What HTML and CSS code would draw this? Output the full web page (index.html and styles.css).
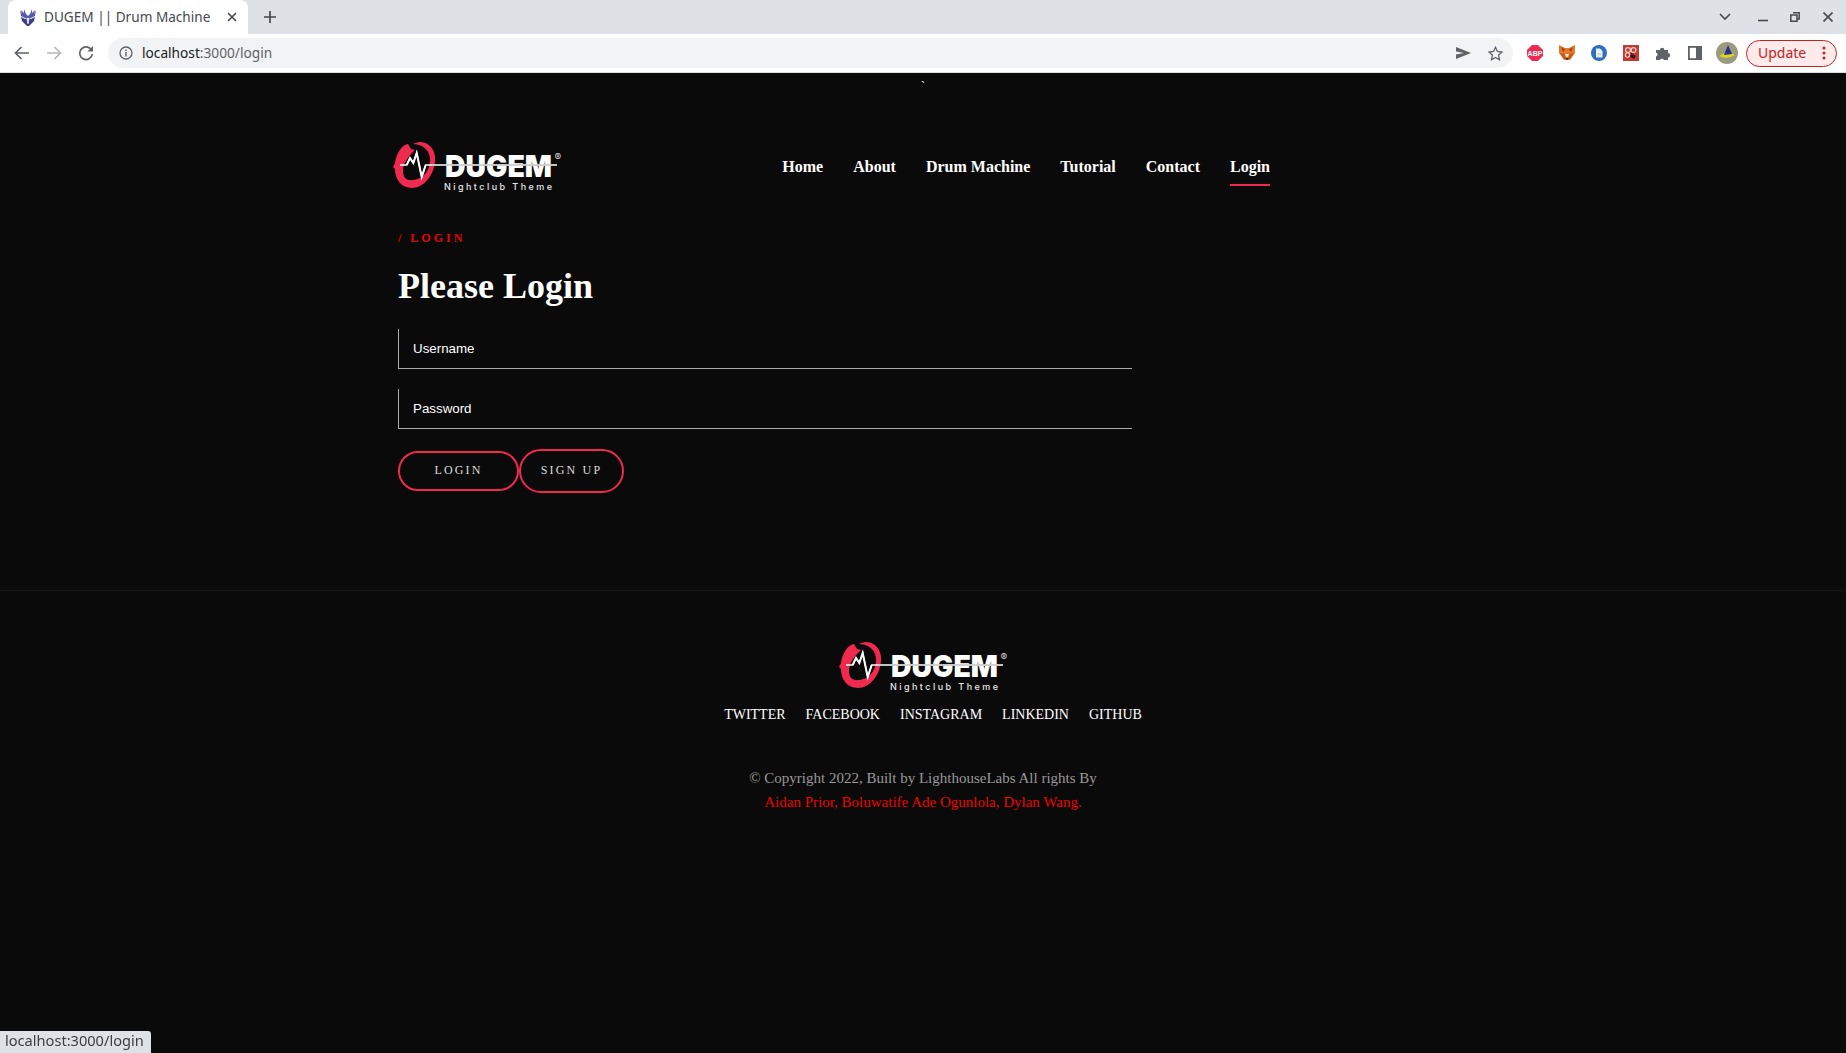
FILE: index.html
```html
<!DOCTYPE html>
<html lang="en">
<head>
    <meta charset="UTF-8">
    <title>DUGEM || Drum Machine</title>
    <link rel="stylesheet" href="styles.css">
</head>
<body>
    <!-- Browser tab strip -->
    <div class="tab-strip">
        <div class="tab">
            <svg class="favicon" width="16" height="17" viewBox="0 0 16 17">
                <path d="M0 1 L2 5 L1 1 L4 4 L4 0 L6 5 L8 7 L10 5 L12 0 L12 4 L15 1 L14 5 L16 1 L15 7 L11 9 L5 9 L1 7 Z" fill="#5a5aa8"/>
                <path d="M1 8 L5 10 L7 9 H9 L11 10 L15 8 L14 12 L9 17 H7 L2 12 Z" fill="#3c3c88"/>
                <path d="M6.5 9 H9.5 L8.6 15 H7.4 Z" fill="#e4e4f4"/>
            </svg>
            <span class="tab-title">DUGEM || Drum Machine</span>
            <svg class="tab-close" width="10" height="10" viewBox="0 0 10 10"><path d="M1 1 L9 9 M9 1 L1 9" stroke="#45484d" stroke-width="1.6"/></svg>
        </div>
        <svg class="new-tab" width="12" height="12" viewBox="0 0 12 12"><path d="M6 0 V12 M0 6 H12" stroke="#45484d" stroke-width="1.7"/></svg>
        <div class="window-btns">
            <svg width="12" height="8" viewBox="0 0 12 8"><path d="M1 1 L6 6 L11 1" fill="none" stroke="#45484d" stroke-width="1.6"/></svg>
            <svg class="win-min" width="10" height="10" viewBox="0 0 10 10"><path d="M0 8.5 H10" stroke="#45484d" stroke-width="1.6"/></svg>
            <svg class="win-max" width="10" height="10" viewBox="0 0 10 10"><path d="M3 .8 H9.2 V7 H7 M.8 3 H7 V9.2 H.8 Z" fill="none" stroke="#45484d" stroke-width="1.5"/></svg>
            <svg class="win-close" width="10" height="10" viewBox="0 0 10 10"><path d="M.5 .5 L9.5 9.5 M9.5 .5 L.5 9.5" stroke="#45484d" stroke-width="1.6"/></svg>
        </div>
    </div>

    <!-- Browser toolbar -->
    <div class="toolbar">
        <svg class="nav-btn" width="16" height="14" viewBox="0 0 16 14"><path d="M15 7 H2 M7.5 1 L1.5 7 L7.5 13" fill="none" stroke="#5f6368" stroke-width="1.7"/></svg>
        <svg class="nav-btn" width="16" height="14" viewBox="0 0 16 14"><path d="M1 7 H14 M8.5 1 L14.5 7 L8.5 13" fill="none" stroke="#b5b8bc" stroke-width="1.7"/></svg>
        <svg class="nav-btn" width="16" height="16" viewBox="0 0 16 16"><path d="M13.6 5.2 A6.3 6.3 0 1 0 14.3 9" fill="none" stroke="#5f6368" stroke-width="1.7"/><path d="M15 1 V6.6 H9.4 Z" fill="#5f6368"/></svg>
        <div class="omnibox">
            <svg width="14" height="14" viewBox="0 0 14 14"><circle cx="7" cy="7" r="6" fill="none" stroke="#5f6368" stroke-width="1.3"/><path d="M7 6 V10.5 M7 3.4 V5" stroke="#5f6368" stroke-width="1.4"/></svg>
            <span class="url"><span class="url-host">localhost</span>:3000/login</span>
            <svg class="omni-send" width="15" height="12" viewBox="0 0 15 12"><path d="M0 0 L15 6 L0 12 L0 7.4 L8 6 L0 4.6 Z" fill="#5f6368"/></svg>
            <svg class="omni-star" width="15" height="15" viewBox="0 0 15 15"><path d="M7.5 1.3 L9.4 5.5 L14 6 L10.6 9.1 L11.5 13.7 L7.5 11.4 L3.5 13.7 L4.4 9.1 L1 6 L5.6 5.5 Z" fill="none" stroke="#5f6368" stroke-width="1.3"/></svg>
        </div>
        <div class="extensions">
            <svg width="16" height="16" viewBox="0 0 16 16"><path d="M5 0 H11 L16 5 V11 L11 16 H5 L0 11 V5 Z" fill="#ee2a52"/><text x="8" y="10.5" class="abp-text" text-anchor="middle">ABP</text></svg>
            <svg width="16" height="16" viewBox="0 0 16 16"><path d="M0 0 L6 3 H10 L16 0 L16 8 L11 15 H5 L0 8 Z" fill="#e8772a"/><path d="M1 8 L6 9 L7 14 H5 Z M15 8 L10 9 L9 14 H11 Z" fill="#c05a1c"/><path d="M6.5 13 H9.5 L8 15.5 Z" fill="#3a2a20"/><path d="M2 2 L6 4.5 L4 7 Z M14 2 L10 4.5 L12 7 Z" fill="#8a4a1e"/><path d="M6 9 H10 L9 12 H7 Z" fill="#f2e3d0"/></svg>
            <svg width="16" height="16" viewBox="0 0 16 16"><circle cx="8" cy="8" r="8" fill="#2f6fbd"/><path d="M5 3.5 H9 L11.5 6 V12.5 H5 Z" fill="#e8eef6"/><path d="M6.5 8 H10 V10 H6.5 Z" fill="#e4d98a"/></svg>
            <svg width="16" height="16" viewBox="0 0 16 16"><rect width="16" height="16" fill="#c63a32"/><circle cx="5" cy="5" r="2.4" fill="none" stroke="#f3d8d4" stroke-width="1.1"/><circle cx="10.5" cy="5" r="2.4" fill="none" stroke="#f3d8d4" stroke-width="1.1"/><circle cx="4.5" cy="10" r="2.2" fill="none" stroke="#f3d8d4" stroke-width="1.1"/><path d="M8 8 L13 11 L11 14 L7 12 Z" fill="#3a1a18"/></svg>
            <svg width="16" height="16" viewBox="0 0 16 16"><path d="M1 5 H5 A2.2 2.2 0 0 1 9.4 5 H13 V8 A2.2 2.2 0 0 1 13 12.4 V15 H9 A2.2 2.2 0 0 0 5 15 H1 V11.6 A2.2 2.2 0 0 0 1 7.4 Z" fill="#5f6368"/></svg>
            <svg class="ext-panel" width="14" height="14" viewBox="0 0 14 14"><rect x=".9" y=".9" width="12.2" height="12.2" fill="none" stroke="#5f6368" stroke-width="1.8"/><rect x="8" y="1" width="5" height="12" fill="#5f6368"/></svg>
            <svg class="ext-avatar" width="22" height="22" viewBox="0 0 22 22"><circle cx="11" cy="11" r="11" fill="#9a9a80"/><path d="M3 14 Q11 8 19 13 Q12 18 3 14 Z" fill="#d8d820"/><path d="M8 13 L12 3 L16 12 Z" fill="#2f2f8a"/></svg>
            <div class="update-btn">
                <span class="update-label">Update</span>
                <svg width="4" height="14" viewBox="0 0 4 14"><circle cx="2" cy="2" r="1.5" fill="#c5221f"/><circle cx="2" cy="7" r="1.5" fill="#c5221f"/><circle cx="2" cy="12" r="1.5" fill="#c5221f"/></svg>
            </div>
        </div>
    </div>

    <!-- Page -->
    <div class="stray">`</div>

    <div class="wrapper">
        <header class="site-header">
            <a class="logo" href="#">
                <svg width="170" height="52" viewBox="0 0 170 52">
                    <path d="M16 3 C9 4 4 14 3 22 L1 26 L3 28 C3 38 9 47 20 47 C32 47 42 34 43 20 C44 10 38 1 28 1 C26 1 23 2 21 3 C28 3 37 7 38 17 C39 28 32 38 21 39 C14 40 11 36 11 30 C11 22 16 16 23 9 L19 8 Z" fill="#f0294f"/>
                    <text x="53" y="36" class="logo-name" textLength="107" lengthAdjust="spacingAndGlyphs">DUGEM</text>
                    <path d="M40 24 H165" stroke="#0a0a0a" stroke-width="1.6"/>
                    <path d="M8 24 H14.7 L18 17 L21.3 22 L24.7 12 L29.7 36 L33.7 24 H165" fill="none" stroke="#fff" stroke-width="1.3"/>
                    <path d="M14.7 24 L18 17 L21.3 22 L24.7 12 L29.7 36 L33.7 24" fill="none" stroke="#fff" stroke-width="2"/>
                    <text x="162.5" y="20" class="logo-reg">®</text>
                    <text x="52" y="48.5" class="logo-tag" textLength="108">Nightclub Theme</text>
                </svg>
            </a>
            <nav class="main-nav">
                <a href="#">Home</a>
                <a href="#">About</a>
                <a href="#">Drum Machine</a>
                <a href="#">Tutorial</a>
                <a href="#">Contact</a>
                <a href="#" class="active">Login</a>
            </nav>
        </header>

        <main class="login-section">
            <div class="crumb">/ LOGIN</div>
            <h1>Please Login</h1>
            <form class="login-form">
                <input type="text" placeholder="Username">
                <input type="password" placeholder="Password">
                <div class="form-btns">
                    <button type="submit" class="btn">LOGIN</button>
                    <button type="button" class="btn btn-signup">SIGN UP</button>
                </div>
            </form>
        </main>
    </div>

    <footer class="site-footer">
        <a class="logo" href="#">
            <svg width="170" height="52" viewBox="0 0 170 52">
                <path d="M16 3 C9 4 4 14 3 22 L1 26 L3 28 C3 38 9 47 20 47 C32 47 42 34 43 20 C44 10 38 1 28 1 C26 1 23 2 21 3 C28 3 37 7 38 17 C39 28 32 38 21 39 C14 40 11 36 11 30 C11 22 16 16 23 9 L19 8 Z" fill="#f0294f"/>
                <text x="53" y="36" class="logo-name" textLength="107" lengthAdjust="spacingAndGlyphs">DUGEM</text>
                <path d="M40 24 H165" stroke="#0a0a0a" stroke-width="1.6"/>
                <path d="M8 24 H14.7 L18 17 L21.3 22 L24.7 12 L29.7 36 L33.7 24 H165" fill="none" stroke="#fff" stroke-width="1.3"/>
                <path d="M14.7 24 L18 17 L21.3 22 L24.7 12 L29.7 36 L33.7 24" fill="none" stroke="#fff" stroke-width="2"/>
                <text x="162.5" y="20" class="logo-reg">®</text>
                <text x="52" y="48.5" class="logo-tag" textLength="108">Nightclub Theme</text>
            </svg>
        </a>
        <div class="social-links">
            <a href="#">TWITTER</a>
            <a href="#">FACEBOOK</a>
            <a href="#">INSTAGRAM</a>
            <a href="#">LINKEDIN</a>
            <a href="#">GITHUB</a>
        </div>
        <p class="copyright">© Copyright 2022, Built by LighthouseLabs All rights By<br><span class="authors">Aidan Prior, Boluwatife Ade Ogunlola, Dylan Wang.</span></p>
    </footer>

    <div class="status-bubble">localhost:3000/login</div>
</body>
</html>
```

FILE: styles.css
```css
/* Global */
html, body {
    height: 100%;
}

body {
    margin: 0;
    overflow: hidden;
    background-color: #0a0a0a;
    color: #fff;
    font-family: "Liberation Serif", serif;
}

a {
    color: inherit;
    text-decoration: none;
}

/* Browser chrome */
.tab-strip {
    display: flex;
    align-items: center;
    height: 34px;
    padding-left: 8px;
    background-color: #dee1e6;
}

.tab {
    display: flex;
    align-items: center;
    width: 240px;
    height: 34px;
    box-sizing: border-box;
    padding: 0 11px 0 12px;
    background-color: #fff;
    border-radius: 8px 8px 0 0;
}

.tab-title {
    margin-left: 8px;
    padding-bottom: 2px;
    font: 13.6px "Noto Sans", sans-serif;
    color: #45484d;
    white-space: nowrap;
}

.tab-close {
    margin-left: auto;
}

.new-tab {
    margin-left: 16px;
}

.window-btns {
    display: flex;
    align-items: center;
    margin-left: auto;
    padding-right: 13px;
}

.win-min {
    margin-left: 27px;
}

.win-max {
    margin-left: 22px;
}

.win-close {
    margin-left: 23px;
}

.toolbar {
    display: flex;
    align-items: center;
    height: 38px;
    padding-left: 14px;
    background-color: #fff;
    border-bottom: 1px solid #dadce0;
}

.nav-btn {
    margin-right: 16px;
}

.omnibox {
    display: flex;
    align-items: center;
    width: 1405px;
    height: 30px;
    box-sizing: border-box;
    margin-left: -2px;
    padding: 0 10px 0 11px;
    background-color: #f1f3f4;
    border-radius: 15px;
}

.url {
    margin-left: 9px;
    padding-bottom: 2px;
    font: 13.7px "Noto Sans", sans-serif;
    color: #5f6368;
}

.url-host {
    color: #202124;
}

.omni-send {
    margin-left: auto;
    margin-right: -1px;
}

.omni-star {
    margin-left: 18px;
}

.extensions {
    display: flex;
    align-items: center;
    gap: 16px;
    margin-left: 14px;
}

.ext-panel {
    margin: 0 1px;
}

.ext-avatar {
    margin: 0 -3px;
}

.abp-text {
    font: bold 7px "Liberation Sans", sans-serif;
    fill: #fff;
}

.update-btn {
    display: flex;
    align-items: center;
    justify-content: space-between;
    width: 91px;
    height: 27px;
    box-sizing: border-box;
    margin-left: -5px;
    padding: 0 10px 0 11px;
    background-color: #fcebea;
    border: 1px solid #c5221f;
    border-radius: 14px;
    font: 14px "Noto Sans", sans-serif;
    color: #c5221f;
}

.update-label {
    padding-bottom: 2px;
}

.status-bubble {
    position: fixed;
    left: 0;
    bottom: 0;
    width: 151px;
    height: 22px;
    box-sizing: border-box;
    padding-left: 5px;
    background-color: #dee1e6;
    border-top-right-radius: 3px;
    font: 14.6px/19px "Noto Sans", sans-serif;
    color: #3c4043;
}

/* Page */
.stray {
    height: 8px;
    padding-top: 6px;
    font-size: 13px;
    line-height: 13px;
    text-align: center;
}

.wrapper {
    width: 1062px;
    margin: 0 auto;
}

.site-header {
    display: flex;
    align-items: center;
    justify-content: space-between;
    width: 878px;
    height: 52px;
    padding-top: 54px;
}

.logo {
    display: block;
    height: 52px;
}

.logo-name {
    font: 900 30px "Inter", sans-serif;
    fill: #fff;
}

.logo-reg {
    font: 10px "Inter", sans-serif;
    fill: #d8d8d8;
}

.logo-tag {
    font: 500 9px "Inter", sans-serif;
    fill: #e8e8e8;
}

.main-nav {
    display: flex;
    gap: 30px;
    font-size: 16px;
    font-weight: bold;
}

.main-nav a {
    padding: 10px 0 8px;
    line-height: 18px;
    border-bottom: 2px solid transparent;
}

.main-nav a.active {
    border-bottom-color: #f0294f;
}

/* Login form */
.login-section {
    padding-left: 6px;
}

.crumb {
    margin-top: 38px;
    font-size: 12px;
    line-height: 14px;
    font-weight: bold;
    letter-spacing: 3px;
    color: #f00000;
}

h1 {
    margin: 20px 0 0;
    font-size: 36px;
    line-height: 42px;
}

.login-form {
    display: flex;
    flex-direction: column;
    width: 734px;
    margin-top: 22px;
}

.login-form input {
    height: 40px;
    box-sizing: border-box;
    margin-bottom: 20px;
    padding: 0 14px;
    background: transparent;
    border: none;
    border-left: 1px solid #aaa;
    border-bottom: 1px solid #aaa;
    outline: none;
    color: #fff;
    font: 13.33px "Liberation Sans", sans-serif;
}

.login-form input::placeholder {
    color: #fff;
    opacity: 1;
}

.form-btns {
    display: flex;
    align-items: center;
    height: 44px;
}

.btn {
    width: 121px;
    height: 40px;
    padding-bottom: 3px;
    background: transparent;
    border: 2px solid #f0294f;
    border-radius: 20px;
    color: #ddd;
    font-family: "Liberation Serif", serif;
    font-size: 12px;
    letter-spacing: 2.16px;
}

.btn-signup {
    width: 105px;
    height: 44px;
    border-radius: 22px;
}

/* Footer */
.site-footer {
    display: flex;
    flex-direction: column;
    align-items: center;
    margin-top: 97px;
    padding-top: 50px;
    border-top: 1px solid #141414;
}

.social-links {
    display: flex;
    gap: 20px;
    margin-top: 13px;
    padding-left: 20px;
    font-size: 14px;
    line-height: 18px;
}

.copyright {
    margin: 42px 0 0;
    font-size: 15px;
    line-height: 24px;
    text-align: center;
    color: #999;
}

.authors {
    color: #f00000;
}
```
